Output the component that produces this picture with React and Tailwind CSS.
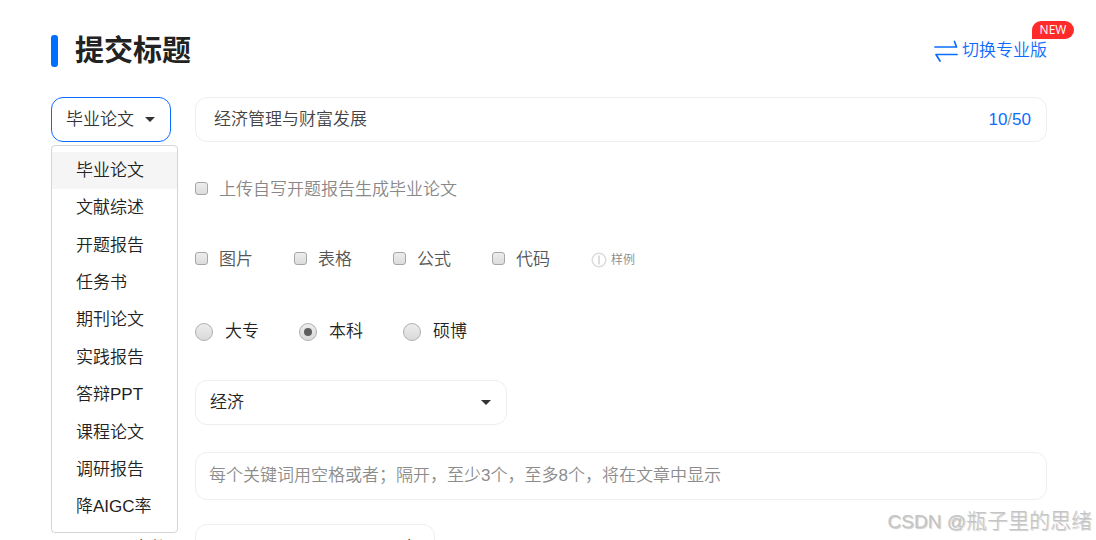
import { useState } from "react"

const PAPER_TYPES = [
  "毕业论文",
  "文献综述",
  "开题报告",
  "任务书",
  "期刊论文",
  "实践报告",
  "答辩PPT",
  "课程论文",
  "调研报告",
  "降AIGC率",
]

const EXTRAS = ["图片", "表格", "公式", "代码"]
const DEGREES = ["大专", "本科", "硕博"]

function SwapIcon() {
  return (
    <svg className="w-6 h-6 shrink-0" viewBox="0 0 24 24" fill="none" stroke="currentColor" strokeWidth="1.7" strokeLinecap="round" strokeLinejoin="round" aria-hidden="true">
      <path d="M1 8h21.500L20.500 2.500" />
      <path d="M23 15.500H2l4 6.500" />
    </svg>
  )
}

function SampleIcon() {
  return (
    <svg className="w-4 h-4 shrink-0" viewBox="0 0 16 16" fill="none" stroke="#dcdcdc" aria-hidden="true">
      <circle cx="8" cy="8" r="6.8" strokeWidth="1.5" />
      <path d="M8 3.5v9" strokeWidth="2" />
    </svg>
  )
}

function Caret() {
  return (
    <svg className="w-[10px] h-[5px] shrink-0 pointer-events-none" viewBox="0 0 10 5" fill="#333" aria-hidden="true">
      <path d="M0 0h10L5 5z" />
    </svg>
  )
}

function Check({ label, className }) {
  return (
    <label className={`flex items-center gap-[11px] ${className}`}>
      <input
        type="checkbox"
        className="appearance-none w-[13px] h-[13px] mb-1 rounded-[3px] border border-[#a6a6a6] bg-linear-to-b from-[#ededed] to-[#dcdcdc] checked:bg-[#0b6cff]"
      />
      {label}
    </label>
  )
}

function Degree({ label, checked, onChange }) {
  return (
    <label className="flex items-center gap-3 text-[#222]">
      <input
        type="radio"
        name="degree"
        checked={checked}
        onChange={onChange}
        className="appearance-none grid place-items-center w-[18px] h-[18px] rounded-full border border-[#b0b0b0] bg-linear-to-b from-[#ececec] to-[#dadada] checked:before:block checked:before:w-2 checked:before:h-2 checked:before:rounded-full checked:before:bg-[#5f5f5f]"
      />
      {label}
    </label>
  )
}

function TypeMenu({ value, onPick }) {
  return (
    <div className="relative w-[120px] shrink-0">
      <button
        type="button"
        aria-haspopup="listbox"
        aria-expanded="true"
        className="flex items-center justify-between w-full h-[45px] pl-[14px] pr-[15px] rounded-xl border border-[#0b6cff] bg-white text-[#333]"
      >
        {value}
        <Caret />
      </button>
      <ul
        role="listbox"
        aria-label="论文类型"
        className="absolute z-10 left-0 top-12 w-[127px] h-[388px] py-1.5 flex flex-col rounded border border-[#d5d5d5] bg-white"
      >
        {PAPER_TYPES.map((type) => (
          <li key={type} role="option" aria-selected={type === value} className="flex-1 flex">
            <button
              type="button"
              onClick={() => onPick(type)}
              className={`w-full pl-6 text-left text-[#222] ${type === value ? "bg-[#f5f5f5]" : "bg-white"}`}
            >
              {type}
            </button>
          </li>
        ))}
      </ul>
    </div>
  )
}

export default function App() {
  const [type, setType] = useState("毕业论文")
  const [title, setTitle] = useState("经济管理与财富发展")
  const [degree, setDegree] = useState("本科")

  return (
    <main className="relative h-screen overflow-hidden bg-white pl-[51px] pr-[49px] pt-[35px] text-[17px] leading-6 font-[350] font-['Liberation_Sans','Noto_Sans_CJK_SC',sans-serif]">

      {/* Header */}
      <header className="flex items-center justify-between h-8">
        <div className="flex items-center gap-[17px]">
          <span className="w-[7px] h-8 rounded-[3px] bg-[#006eff]" />
          <h1 className="text-[29px] leading-8 font-bold text-[#222]">提交标题</h1>
        </div>
        <a href="#pro" className="relative flex items-center gap-1 text-[#0b6cff]">
          <SwapIcon />
          切换专业版
          <span className="absolute -top-[18px] -right-[27px] w-[42px] h-[18px] rounded-full rounded-bl-none bg-[#ff2b2b] text-center text-xs leading-[18px] font-medium text-white font-['Open_Sans',sans-serif]">
            NEW
          </span>
        </a>
      </header>

      {/* Type and title */}
      <div className="mt-[30px] flex gap-6">
        <TypeMenu value={type} onPick={setType} />
        <div className="flex-1 min-w-0 flex items-center h-[45px] pl-[18px] pr-[15px] rounded-xl border border-[#eee]">
          <input
            aria-label="标题"
            value={title}
            onChange={(e) => setTitle(e.target.value)}
            className="flex-1 min-w-0 text-[#444] outline-none"
          />
          <span className="font-normal text-[#0b6cff]">
            10<span className="text-[#999]">/</span>50
          </span>
        </div>
      </div>

      {/* Options */}
      <div className="ml-36 flex flex-col">
        <Check label="上传自写开题报告生成毕业论文" className="mt-[36px] text-[#888]" />

        <div className="mt-[46px] flex items-center gap-[41px]">
          {EXTRAS.map((name) => (
            <Check key={name} label={name} className="text-[#555]" />
          ))}
          <a href="#sample" className="flex items-center gap-1 text-xs text-[#888]">
            <SampleIcon />
            样例
          </a>
        </div>

        <div className="mt-12 flex items-center gap-10">
          {DEGREES.map((name) => (
            <Degree key={name} label={name} checked={degree === name} onChange={() => setDegree(name)} />
          ))}
        </div>

        <div className="mt-9 relative flex items-center w-[312px] h-[45px] rounded-xl border border-[#eee]">
          <select aria-label="专业" className="appearance-none w-full h-full pl-[14px] text-[#222] outline-none">
            <option>经济</option>
          </select>
          <span className="absolute right-[15px] flex pointer-events-none">
            <Caret />
          </span>
        </div>

        <input
          aria-label="关键词"
          placeholder="每个关键词用空格或者；隔开，至少3个，至多8个，将在文章中显示"
          className="mt-[27px] w-full h-12 px-[13px] rounded-xl border border-[#eee] placeholder:text-[#8c8c8c] outline-none"
        />
      </div>

      {/* Word count */}
      <div className="mt-6 flex items-center gap-7">
        <label htmlFor="words" className="w-[116px] pt-1 text-right text-[#222]">字数</label>
        <div className="flex items-center w-[240px] h-[45px] pr-4 rounded-xl border border-[#eee]">
          <input id="words" className="flex-1 min-w-0 h-full pl-[14px] outline-none" />
          <span className="pt-1 text-[#222]">字</span>
        </div>
      </div>

      <p className="absolute right-1 bottom-1.5 text-[21px] leading-6 font-light text-[#c4c4c4] [text-shadow:1px_1px_1px_#ccc]">
        <span className="text-[19px]">CSDN @</span>瓶子里的思绪
      </p>
    </main>
  )
}
